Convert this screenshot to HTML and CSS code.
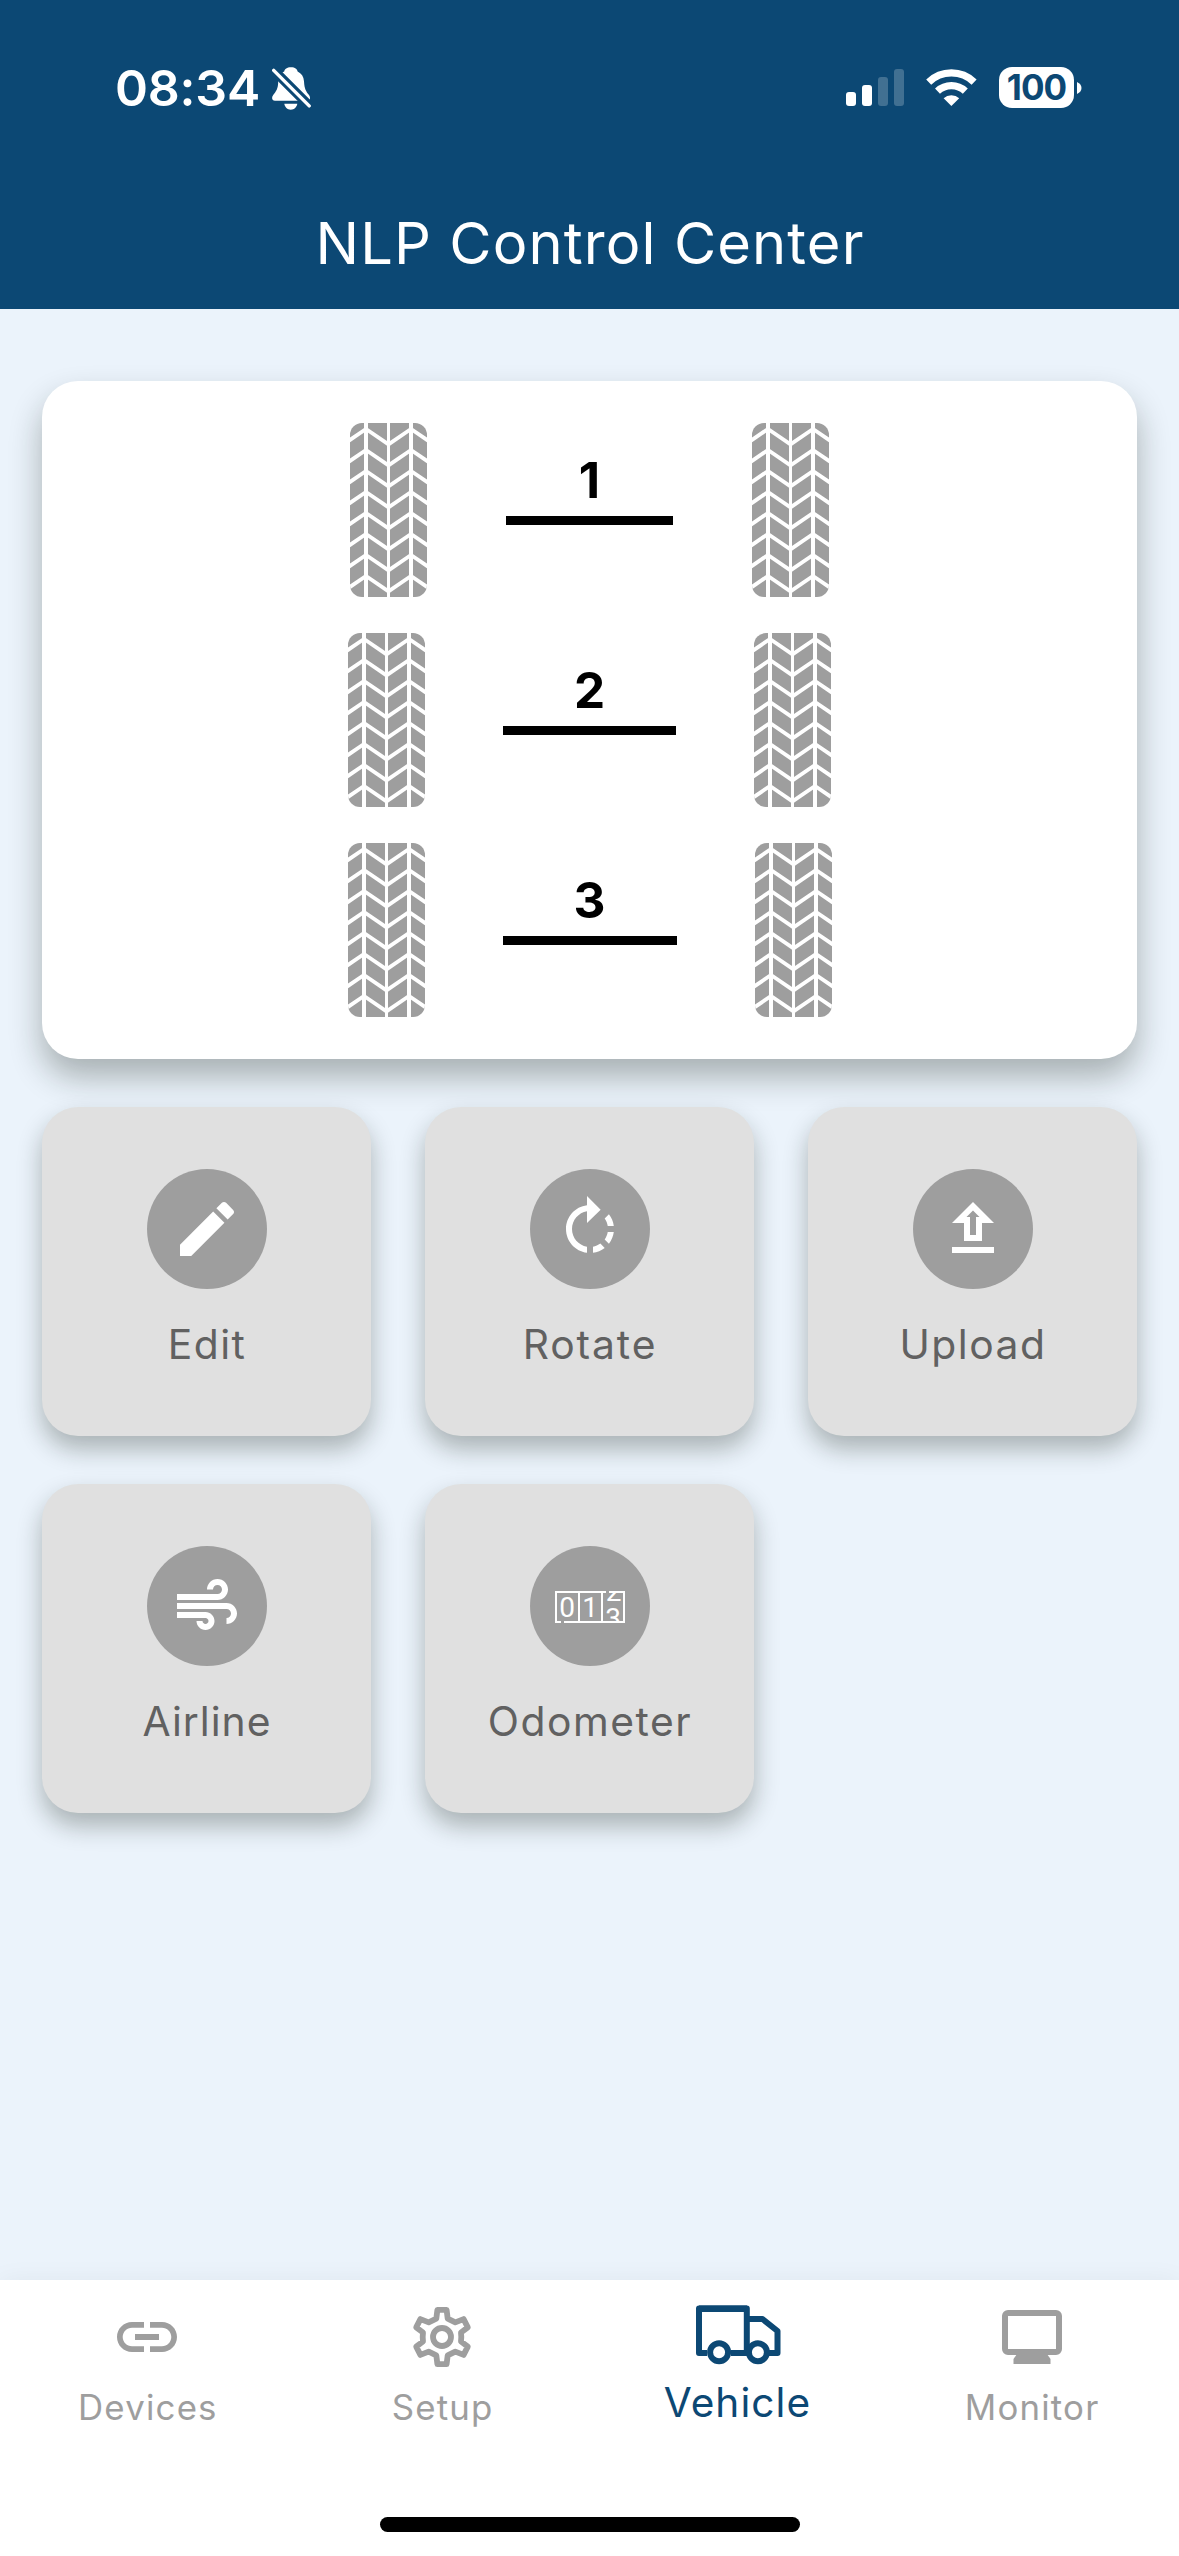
FILE: index.html
```html
<!DOCTYPE html>
<html lang="en">
<head>
<meta charset="utf-8">
<meta name="viewport" content="width=device-width">
<title>NLP Control Center</title>
<link rel="stylesheet" href="styles.css">
</head>
<body>
<svg class="defs" aria-hidden="true">
  <defs>
    <clipPath id="tread"><rect width="77" height="174" rx="12"/></clipPath>
    <symbol id="tire" viewBox="0 0 77 174">
      <g clip-path="url(#tread)">
        <rect width="77" height="174" fill="#9e9e9e"/>
        <g fill="none" stroke="#fff" stroke-width="3.9">
          <path d="M-1 17.6 16 6 38.5 21.3 61 6 78 17.6"/>
          <path d="M-1 38.6 16 27 38.5 42.3 61 27 78 38.6"/>
          <path d="M-1 59.6 16 48 38.5 63.3 61 48 78 59.6"/>
          <path d="M-1 80.6 16 69 38.5 84.3 61 69 78 80.6"/>
          <path d="M-1 101.6 16 90 38.5 105.3 61 90 78 101.6"/>
          <path d="M-1 122.6 16 111 38.5 126.3 61 111 78 122.6"/>
          <path d="M-1 143.6 16 132 38.5 147.3 61 132 78 143.6"/>
          <path d="M-1 164.6 16 153 38.5 168.3 61 153 78 164.6"/>
        </g>
        <path fill="#fff" d="M14 0h4v174h-4zM37 0h3v174h-3zM59 0h4v174h-4z"/>
      </g>
    </symbol>
  </defs>
</svg>

<div class="screen">
  <header class="header">
    <div class="status">
      <span class="time">08:34</span>
      <svg class="bell" width="40" height="43" viewBox="0 0 40 43">
        <path fill="#fff" d="M19 .3C14.8.3 12.8 2 12.2 4.4 8 6.2 6.2 9.8 6.2 14.2 6.2 22 4 24.3 1.2 28-.8 30.8 0 33.8 3 33.8H35c3 0 4-3 2-5.8C34 24.3 32.4 22 32 14.2 31.7 9.500 29.500 6.200 25.600 4.400 25 2 23.200.3 19 .3zM12.300 36.800H25.300C24.800 40.200 22.300 42.700 18.800 42.700S12.800 40.200 12.300 36.800z"/>
        <path class="bell-gap" d="M0 1.500 40 41.500"/>
        <path stroke="#fff" stroke-width="3.400" stroke-linecap="round" d="M1.700 3.400 37.200 38.900"/>
      </svg>
      <svg class="signal" width="58" height="37" viewBox="0 0 58 37">
        <g fill="#fff">
          <rect y="23" width="10" height="14" rx="3"/>
          <rect x="16" y="16" width="10" height="21" rx="3"/>
          <rect x="32" y="8" width="10" height="29" rx="3" opacity=".22"/>
          <rect x="48" width="10" height="37" rx="3" opacity=".22"/>
        </g>
      </svg>
      <svg class="wifi" width="51" height="37" viewBox="0 0 51 37">
        <g fill="none" stroke="#fff" stroke-width="7.200">
          <path d="M2.700 13.100A32.700 32.700 0 0 1 48.100 13.100"/>
          <path d="M11.500 22.100A20.200 20.200 0 0 1 39.300 22.100"/>
        </g>
        <path fill="#fff" d="M25.400 37 17.600 29.200A11.500 11.500 0 0 1 33.200 29.200z"/>
      </svg>
      <span class="battery">100</span>
      <svg width="5" height="12" viewBox="0 0 5 12"><path fill="#fff" d="M0 0C6 2.500 6 9.500 0 12z"/></svg>
    </div>
    <h1 class="title">NLP Control Center</h1>
  </header>

  <main class="content">
    <section class="card">
      <div class="axle">
        <svg class="tire"><use href="#tire"/></svg>
        <div class="axle-mid axle-mid-1"><span class="num">1</span><i class="bar"></i></div>
        <svg class="tire"><use href="#tire"/></svg>
      </div>
      <div class="axle">
        <svg class="tire"><use href="#tire"/></svg>
        <div class="axle-mid axle-mid-2"><span class="num">2</span><i class="bar"></i></div>
        <svg class="tire"><use href="#tire"/></svg>
      </div>
      <div class="axle">
        <svg class="tire"><use href="#tire"/></svg>
        <div class="axle-mid axle-mid-3"><span class="num">3</span><i class="bar"></i></div>
        <svg class="tire"><use href="#tire"/></svg>
      </div>
    </section>

    <section class="tiles">
      <div class="tile">
        <span class="disc"><svg width="72" height="72" viewBox="0 0 24 24"><path d="M3 17.250V21h3.750L17.810 9.940l-3.750-3.750L3 17.250zM20.710 7.040c.39-.39.39-1.020 0-1.410l-2.340-2.340c-.39-.39-1.020-.39-1.410 0l-1.830 1.830 3.750 3.750 1.830-1.830z"/></svg></span>
        <span class="label">Edit</span>
      </div>
      <div class="tile">
        <span class="disc"><svg width="72" height="72" viewBox="0 0 24 24"><path d="M15.550 5.550L11 1v3.070C7.060 4.560 4 7.920 4 12s3.050 7.440 7 7.930v-2.020c-2.840-.48-5-2.940-5-5.910s2.160-5.430 5-5.910V10l4.550-4.450zM19.930 11c-.17-1.390-.72-2.730-1.620-3.890l-1.420 1.420c.54.75.88 1.600 1.020 2.470h2.020zM13 17.900v2.020c1.390-.17 2.740-.71 3.900-1.610l-1.440-1.440c-.75.54-1.590.89-2.460 1.030zm3.890-2.420l1.420 1.410c.9-1.160 1.450-2.500 1.620-3.890h-2.020c-.14.870-.48 1.720-1.020 2.480z"/></svg></span>
        <span class="label label-wide">Rotate</span>
      </div>
      <div class="tile">
        <span class="disc"><svg width="72" height="72" viewBox="0 0 24 24"><path d="M5 10h4v6h6v-6h4l-7-7-7 7zm8-2v6h-2V8H9.830L12 5.830 14.170 8H13zM5 18h14v2H5z"/></svg></span>
        <span class="label">Upload</span>
      </div>
      <div class="tile">
        <span class="disc"><svg width="72" height="72" viewBox="0 0 24 24"><path d="M14.500 17c0 1.650-1.350 3-3 3s-3-1.350-3-3h2c0 .55.45 1 1 1s1-.45 1-1-.45-1-1-1H2v-2h9.500c1.650 0 3 1.350 3 3zM19 6.500C19 4.570 17.430 3 15.500 3S12 4.570 12 6.500h2c0-.83.67-1.500 1.500-1.500s1.500.67 1.500 1.500S16.330 8 15.500 8H2v2h13.500c1.930 0 3.500-1.570 3.500-3.500zM18.500 11H2v2h16.500c.83 0 1.500.67 1.500 1.500s-.67 1.500-1.500 1.500v2c1.930 0 3.500-1.570 3.500-3.500S20.430 11 18.500 11z"/></svg></span>
        <span class="label label-tight">Airline</span>
      </div>
      <div class="tile">
        <span class="disc">
          <svg class="odometer" width="70" height="32" viewBox="0 0 70 32">
            <clipPath id="window"><path d="M48 1H68V31H48z"/></clipPath>
            <path d="M0 0H51V2H48V30H68V2H54V0H70V32H9V30H46V2H25V30H23V2H2V30H6V32H0z"/>
            <g class="digits">
              <text x="12" y="26">0</text>
              <text x="35" y="25.500">1</text>
              <g clip-path="url(#window)"><text x="58.500" y="10">2</text><text x="58" y="37">3</text></g>
            </g>
          </svg>
        </span>
        <span class="label">Odometer</span>
      </div>
    </section>
  </main>

  <nav class="nav">
    <div class="tabs">
      <div class="tab">
        <svg width="72" height="72" viewBox="0 0 24 24"><path d="M3.900 12c0-1.710 1.390-3.100 3.100-3.100h4V7H7c-2.760 0-5 2.240-5 5s2.240 5 5 5h4v-1.900H7c-1.710 0-3.100-1.390-3.100-3.100zM8 13h8v-2H8v2zm9-6h-4v1.900h4c1.710 0 3.100 1.390 3.100 3.100s-1.390 3.100-3.100 3.100h-4V17h4c2.760 0 5-2.240 5-5s-2.240-5-5-5z"/></svg>
        <span class="tab-label">Devices</span>
      </div>
      <div class="tab">
        <svg width="72" height="72" viewBox="-36 -36 72 72">
          <g fill="none" stroke="#9e9e9e" stroke-width="5.800" stroke-linejoin="round">
            <path d="M-4.600-27.200H4.600L5.700-18.300 13.300-14.600 21.600-17.900 25.800-9.600 19-4.500Q19.600 0 19 4.500L25.800 9.600 21.600 17.900 13.300 14.600 5.700 18.300 4.600 27.200H-4.600L-5.700 18.300-13.300 14.600-21.600 17.900-25.800 9.600-19 4.500Q-19.600 0-19-4.500L-25.800-9.600-21.600-17.900-13.300-14.600-5.700-18.300z"/>
            <circle r="9"/>
          </g>
        </svg>
        <span class="tab-label">Setup</span>
      </div>
      <div class="tab tab-active">
        <svg width="88" height="72" viewBox="0 0 88 72">
          <g fill="none" stroke="#0c4874" stroke-width="6">
            <path stroke-linejoin="round" d="M14 54H6V9.500H53.800V54H38"/>
            <path d="M6 9.800H54" stroke-width="6.500"/>
            <path stroke-linejoin="round" d="M54 20H69.500L84.500 32V54H74"/>
            <circle cx="26.100" cy="53.300" r="9"/>
            <circle cx="64.900" cy="53.300" r="9"/>
          </g>
        </svg>
        <span class="tab-label">Vehicle</span>
      </div>
      <div class="tab">
        <svg width="72" height="72" viewBox="0 0 72 72">
          <rect x="9" y="12" width="54" height="39" rx="3" fill="none" stroke="#9e9e9e" stroke-width="6"/>
          <path d="M17.500 63V58L21 53H51L54.500 58V63z"/>
        </svg>
        <span class="tab-label">Monitor</span>
      </div>
    </div>
    <div class="home"></div>
  </nav>
</div>
</body>
</html>
```
FILE: styles.css
```css
* { box-sizing: border-box; }
body { margin: 0; font-family: Inter, "Liberation Sans", sans-serif; }
svg { display: block; flex: none; }
.defs { position: absolute; width: 0; height: 0; }

.screen {
  display: flex;
  flex-direction: column;
  width: 1179px;
  height: 2556px;
  background: #ebf3fb;
  overflow: hidden;
}

.header { height: 309px; background: #0c4874; color: #fff; }
.status {
  display: flex;
  align-items: center;
  height: 175px;
  margin-bottom: 2px;
  padding: 0 97px 0 115px;
}
.time { font-size: 50px; font-weight: 600; letter-spacing: -.2px; line-height: 60px; }
.bell { margin: 2px 0 0 12px; }
.bell-gap { stroke: #0c4874; stroke-width: 9.5; }
.signal { margin-left: auto; }
.wifi { margin: 0 22px; }
.battery {
  width: 75px;
  height: 41px;
  margin-right: 3px;
  border-radius: 13px;
  background: #fff;
  color: #0c4874;
  font-size: 35px;
  font-weight: 700;
  line-height: 41px;
  letter-spacing: -.9px;
  text-align: center;
}
.title {
  margin: 0;
  padding-left: 1px;
  font-size: 57.8px;
  font-weight: 400;
  line-height: 132px;
  letter-spacing: 1.12px;
  text-align: center;
}

.content { flex: 1; padding: 72px 42px 0; }
.card {
  display: flex;
  flex-direction: column;
  gap: 36px;
  padding: 42px 0;
  border-radius: 36px;
  background: #fff;
  box-shadow: 0 18px 32px rgba(20, 30, 20, .31);
}
.axle { display: flex; justify-content: center; gap: 78px; height: 174px; }
.tire { width: 77px; height: 174px; }
.axle-mid {
  display: flex;
  flex-direction: column;
  align-items: center;
  gap: 6px;
  padding-top: 27px;
}
.axle-mid-1 { width: 167px; margin: 0 1px; }
.axle-mid-2 { width: 173px; }
.axle-mid-3 { width: 174px; }
.num { font-size: 49.5px; font-weight: 700; line-height: 60px; }
.bar { width: 100%; height: 9px; background: #000; }

.tiles {
  display: grid;
  grid-template-columns: repeat(3, 329px);
  gap: 48px 54px;
  margin-top: 48px;
}
.tile {
  display: flex;
  flex-direction: column;
  align-items: center;
  gap: 30px;
  height: 329px;
  padding-top: 62px;
  border-radius: 36px;
  background: #e0e0e0;
  box-shadow: 0 13px 24px rgba(20, 30, 20, .3);
}
.disc {
  display: grid;
  place-items: center;
  width: 120px;
  height: 120px;
  border-radius: 50%;
  background: #9e9e9e;
  fill: #fff;
}
.odometer { margin-top: 2px; }
.digits { font-family: Roboto, sans-serif; font-size: 28px; text-anchor: middle; }
.label {
  padding-left: 1px;
  font-size: 40.8px;
  line-height: 50px;
  letter-spacing: 1.5px;
  color: #616161;
}
.label-wide { letter-spacing: 1.9px; }
.label-tight { letter-spacing: 1px; }

.nav {
  display: flex;
  flex-direction: column;
  justify-content: space-between;
  align-items: center;
  height: 276px;
  padding-bottom: 24px;
  background: #fff;
  box-shadow: 0 0 24px rgba(20, 30, 20, .05);
}
.tabs { display: grid; grid-template-columns: repeat(4, 1fr); width: 100%; }
.tab {
  display: flex;
  flex-direction: column;
  align-items: center;
  gap: 12px;
  padding-top: 21px;
  color: #9e9e9e;
  fill: #9e9e9e;
}
.tab-label {
  padding-left: 1px;
  font-size: 34.8px;
  line-height: 44px;
  letter-spacing: 1.2px;
}
.tab-active { gap: 7px; padding-top: 19px; color: #0c4874; }
.tab-active .tab-label { font-size: 40.6px; line-height: 50px; letter-spacing: 1.05px; }
.home { width: 420px; height: 15px; border-radius: 8px; background: #000; }
```
